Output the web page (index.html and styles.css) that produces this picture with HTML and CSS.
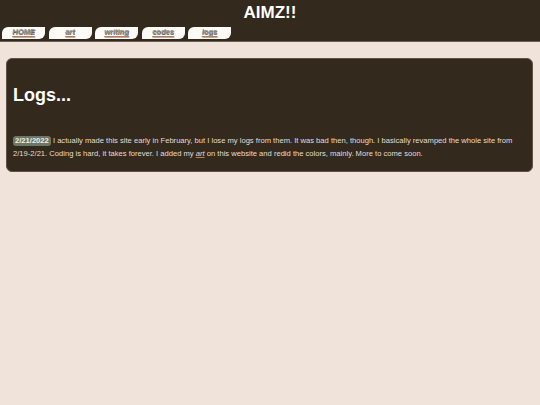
FILE: index.html
```html
<!DOCTYPE html>
<html>
<head>
<meta charset="utf-8">
<link rel="stylesheet" href="styles.css">
</head>
<body>
<header class="top">
  <h1 class="site-title">AIMZ!!</h1>
  <nav class="tabs">
    <a class="tab" href="#">HOME</a>
    <a class="tab" href="#">art</a>
    <a class="tab" href="#">writing</a>
    <a class="tab" href="#">codes</a>
    <a class="tab" href="#">logs</a>
  </nav>
</header>
<main class="content">
  <section class="card">
    <h2 class="card-title">Logs...</h2>
    <p class="entry"><span class="date">2/21/2022</span> I actually made this site early in February, but I lose my logs from them. It was bad then, though. I basically revamped the whole site from 2/19-2/21. Coding is hard, it takes forever. I added my <a class="inline-link" href="#">art</a> on this website and redid the colors, mainly. More to come soon.</p>
  </section>
</main>
</body>
</html>
```
FILE: styles.css
```css
html, body {
  margin: 0;
  padding: 0;
}
body {
  background: #f0e3d9;
  font-family: "Liberation Sans", Arial, sans-serif;
  width: 540px;
  height: 405px;
}
.top {
  background: #33291d;
  border-bottom: 1px solid #6a5f52;
  height: 42px;
  box-sizing: border-box;
  padding-top: 3px;
}
.site-title {
  margin: 0;
  text-align: center;
  color: #ffffff;
  font-size: 17px;
  line-height: 19px;
  font-weight: bold;
}
.tabs {
  display: flex;
  gap: 3.5px;
  padding-left: 2px;
  margin-top: 5px;
}
.tab {
  display: block;
  width: 43px;
  height: 12px;
  box-sizing: border-box;
  background: #fdfbf8;
  border-radius: 6px 0 6px 0;
  text-align: center;
  color: #908e8a;
  font-size: 7.5px;
  line-height: 10px;
  font-weight: bold;
  font-style: italic;
  text-decoration: underline;
  text-decoration-color: #b87a4e;
  text-decoration-thickness: 1px;
  text-underline-offset: 1.5px;
  text-shadow: 0.5px 0.5px 0 #6a6660;
}
.content {
  padding: 16px 7px 0 6px;
}
.card {
  background: #33291d;
  border: 1px solid #5e5244;
  border-radius: 6px;
  padding: 1px 7px 6px 6px;
  height: 114px;
  box-sizing: border-box;
}
.card-title {
  margin: 24px 0 0 0;
  color: #ffffff;
  font-size: 18px;
  line-height: 22px;
  font-weight: bold;
}
.entry {
  margin: 28px 0 0 0;
  color: #e4ded5;
  font-size: 7.6px;
  line-height: 13px;
}
.date {
  display: inline-block;
  background: #6c7765;
  color: #f0f0e8;
  font-weight: bold;
  border-radius: 3px;
  padding: 0 2px;
  line-height: 10px;
}
.inline-link {
  color: #e4ded5;
  font-style: italic;
  text-decoration: underline;
  text-decoration-color: #c1794a;
}
```
